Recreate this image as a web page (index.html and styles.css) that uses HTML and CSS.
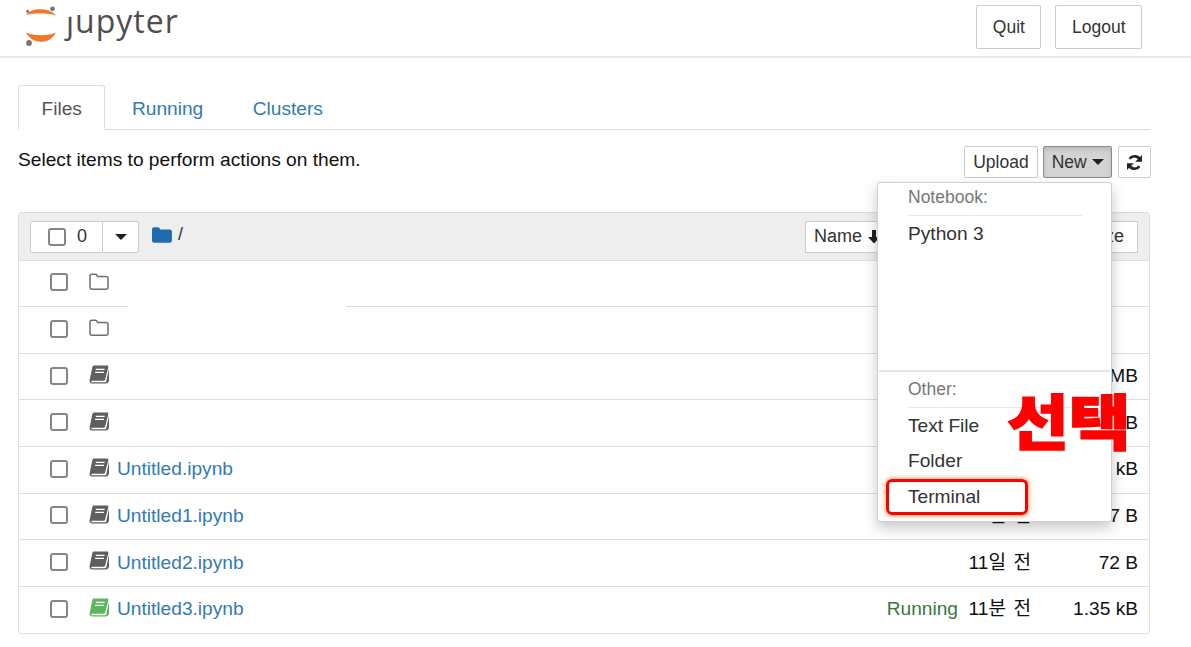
FILE: index.html
```html
<!DOCTYPE html>
<html lang="ko">
<head>
<meta charset="utf-8">
<title>Jupyter</title>
<link rel="stylesheet" href="styles.css">
</head>
<body>
<svg class="defs" width="0" height="0" aria-hidden="true">
  <symbol id="i-folder" viewBox="0 0 20 17">
    <path d="M1 3.2C1 2 1.8 1.2 3 1.2h3.4c1.100 0 1.700.7 1.900 1.500l.3.9h8.400c1.200 0 2 .8 2 2v8.600c0 1.200-.8 2-2 2H3c-1.200 0-2-.8-2-2z" fill="none" stroke="#6f6f6f" stroke-width="1.500"/>
  </symbol>
  <symbol id="i-book" viewBox="0 0 20 19">
    <path d="M5.200.6h13c.9 0 1.400.7 1.100 1.600l-3.100 12.100c-.3 1-.9 1.500-1.900 1.500H3.200c-.7 0-1 .3-1 .7 0 .5.4.8 1.100.8h12.600c.7 0 1.200-.4 1.400-1L20 3.400v12.300c-.4 1.500-1.600 2.700-3.200 2.700H3.200C1.300 18.400.2 17 .6 15.200L3.300 2.200C3.500 1.200 4.200.6 5.200.6z" fill="currentColor"/>
    <path d="M6.800 4.300h8.800M6.100 7.300h8.800" stroke="#fff" stroke-width="1.300"/>
  </symbol>
</svg>

<header class="topbar">
  <div class="logo">
    <svg class="logo-mark" width="32" height="40" viewBox="0 0 32 40" aria-hidden="true">
      <path d="M1 9C6 1.300 25 1.300 31 9.500 24 7 8 7 1 9z" fill="#f37726"/>
      <path d="M1 26.500C8 30 24 30 31 26.500 25 38.800 7 38.800 1 26.500z" fill="#f37726"/>
      <circle cx="27.500" cy="2.800" r="2.400" fill="#767677"/>
      <circle cx="2.600" cy="5.200" r="1.500" fill="#767677"/>
      <circle cx="4" cy="37" r="2.900" fill="#767677"/>
    </svg>
    <span class="logo-text"><span class="logo-j">j</span>upyter</span>
  </div>
  <div class="topbar-actions">
    <button class="btn btn-top">Quit</button>
    <button class="btn btn-top">Logout</button>
  </div>
</header>

<main class="page">
  <nav class="tabs">
    <a class="tab tab-active">Files</a>
    <a class="tab">Running</a>
    <a class="tab">Clusters</a>
  </nav>

  <div class="toolbar">
    <span class="hint">Select items to perform actions on them.</span>
    <div class="toolbar-actions">
      <button class="btn btn-tool">Upload</button>
      <button class="btn btn-tool btn-pressed">New <i class="caret"></i></button>
      <button class="btn btn-tool btn-refresh" aria-label="Refresh">
        <svg width="17" height="17" viewBox="0 0 17 17" aria-hidden="true">
          <path d="M14.200 6.500A6 6 0 0 0 3.600 4.800" fill="none" stroke="#222" stroke-width="2.600"/>
          <path d="M16 1v6.800H9.200z" fill="#222"/>
          <path d="M2.800 10.500a6 6 0 0 0 10.600 1.700" fill="none" stroke="#222" stroke-width="2.600"/>
          <path d="M1 16V9.200h6.800z" fill="#222"/>
        </svg>
      </button>
    </div>
  </div>

  <section class="list">
    <div class="list-head">
      <div class="select-group">
        <span class="select-all"><i class="check"></i><span>0</span></span>
        <span class="select-drop"><i class="caret"></i></span>
      </div>
      <svg class="crumb-icon" width="20" height="16" viewBox="0 0 20 16" aria-hidden="true">
        <path d="M0 2.500C0 1.200.9.300 2.200.300h3.600c1.200 0 1.900.8 2.100 1.600l.2.700h9.600c1.300 0 2.200.9 2.200 2.200v8.800c0 1.300-.9 2.100-2.200 2.100H2.200C.9 15.700 0 14.900 0 13.600z" fill="#1f6bb0"/>
      </svg>
      <span class="crumb">/</span>
      <div class="sort-group">
        <span class="sort sort-name">Name
          <svg width="14" height="15" viewBox="0 0 14 15" aria-hidden="true"><path d="M5 1h4v7h4l-6 6.500L1 8h4z" fill="#222"/></svg>
        </span>
        <span class="sort sort-mod"></span>
        <span class="sort sort-size">File size</span>
      </div>
    </div>

    <div class="row">
      <i class="check"></i><svg class="ficon"><use href="#i-folder"/></svg>
    </div>
    <div class="row">
      <i class="redact"></i>
      <i class="check"></i><svg class="ficon"><use href="#i-folder"/></svg>
    </div>
    <div class="row">
      <i class="check"></i><svg class="ficon nb"><use href="#i-book"/></svg>
      <span class="size size-only">MB</span>
    </div>
    <div class="row">
      <i class="check"></i><svg class="ficon nb"><use href="#i-book"/></svg>
      <span class="size size-only">B</span>
    </div>
    <div class="row">
      <i class="check"></i><svg class="ficon nb"><use href="#i-book"/></svg>
      <a class="name">Untitled.ipynb</a>
      <span class="size size-only">kB</span>
    </div>
    <div class="row">
      <i class="check"></i><svg class="ficon nb"><use href="#i-book"/></svg>
      <a class="name">Untitled1.ipynb</a>
      <span class="date">11일 전</span><span class="size">7 B</span>
    </div>
    <div class="row">
      <i class="check"></i><svg class="ficon nb"><use href="#i-book"/></svg>
      <a class="name">Untitled2.ipynb</a>
      <span class="date">11일 전</span><span class="size">72 B</span>
    </div>
    <div class="row">
      <i class="check"></i><svg class="ficon nb-run"><use href="#i-book"/></svg>
      <a class="name">Untitled3.ipynb</a>
      <span class="status">Running</span>
      <span class="date date-run">11분 전</span><span class="size">1.35 kB</span>
    </div>
  </section>
</main>

<div class="menu">
  <div class="menu-head">Notebook:</div>
  <div class="menu-item menu-python">Python 3</div>
  <div class="menu-rule"></div>
  <div class="menu-head">Other:</div>
  <div class="menu-item">Text File</div>
  <div class="menu-item">Folder</div>
  <div class="menu-item">Terminal</div>
  <div class="highlight"></div>
</div>
<div class="callout">선택</div>
</body>
</html>
```
FILE: styles.css
```css
* { box-sizing: border-box; }
html, body { margin: 0; height: 100%; }
body {
  position: relative;
  overflow: hidden;
  background: #fff;
  color: #111;
  font: 19.15px/1.4 "Liberation Sans", Arial, "Noto Sans CJK KR", sans-serif;
}
.defs { position: absolute; }
i { font-style: normal; }

.topbar {
  height: 58px;
  border-bottom: 2px solid #e7e7e7;
  display: flex;
  justify-content: space-between;
  padding: 5px 49px 0 25px;
}
.logo { display: flex; align-items: flex-start; height: 44px; }
.logo-mark { margin-top: 1px; flex: none; }
.logo-text {
  margin: -8px 0 0 9px;
  font: 32px/1.5 "Open Sans", sans-serif;
  letter-spacing: 1px;
  color: #4e4e4e;
}
.logo-j { display: inline-block; clip-path: inset(.62em -2px 0 -5px); }
.topbar-actions { display: flex; gap: 14px; }

.btn {
  font: inherit;
  font-size: 17.5px;
  color: #333;
  background: #fff;
  border: 1px solid #ccc;
  border-radius: 2px;
  padding: 0;
}
.btn-top { height: 44px; padding: 0 15.5px; }

.page { padding: 27px 41px 0 18px; }

.tabs { display: flex; gap: 3.5px; height: 45px; border-bottom: 1px solid #ddd; }
.tab {
  height: 45px;
  padding: 0 22px;
  line-height: 46px;
  color: #337ab7;
  border: 1px solid transparent;
}
.tab-active {
  padding: 0 22.5px;
  color: #555;
  background: #fff;
  border-color: #ddd #ddd #fff;
  border-radius: 3px 3px 0 0;
}

.toolbar {
  height: 82px;
  padding-top: 16px;
  display: flex;
  justify-content: space-between;
  align-items: flex-start;
}
.hint { line-height: 27px; }
.toolbar-actions { display: flex; gap: 5px; margin-right: -1px; }
.btn-tool { height: 32px; padding: 0 8.5px; }
.btn-pressed {
  padding: 0 7.5px;
  background: #d4d4d4;
  border-color: #8c8c8c;
  box-shadow: inset 0 3px 5px rgba(0,0,0,.125);
  margin-right: 1px;
}
.btn-refresh { width: 33px; padding: 0; display: flex; align-items: center; justify-content: center; }
.caret {
  display: inline-block;
  width: 0;
  height: 0;
  border-top: 6px solid #222;
  border-left: 6px solid transparent;
  border-right: 6px solid transparent;
  vertical-align: 3px;
}

.list { border: 1px solid #ddd; border-radius: 3px; height: 422px; }
.list-head {
  height: 46.6px;
  background: #eee;
  padding: 8px 11px 0 11px;
  display: flex;
  align-items: flex-start;
}
.select-group {
  display: flex;
  width: 109px;
  height: 32px;
  background: #fff;
  border: 1px solid #ccc;
  border-radius: 2px;
}
.select-all { width: 71px; display: flex; align-items: center; padding-left: 17px; gap: 11px; color: #333; font-size: 18px; }
.select-all .check { margin: 0; }
.select-drop { flex: 1; border-left: 1px solid #ccc; display: flex; align-items: center; justify-content: center; }
.select-drop .caret { vertical-align: 0; }
.crumb-icon { margin: 6px 0 0 13px; flex: none; }
.crumb { margin: 1px 0 0 6px; color: #333; font-size: 18px; }
.sort-group { margin-left: auto; display: flex; height: 32px; }
.sort {
  height: 32px;
  background: #fff;
  border: 1px solid #ccc;
  margin-left: -1px;
  padding: 0 8px;
  line-height: 28px;
  font-size: 18px;
  color: #333;
  white-space: nowrap;
}
.sort svg { vertical-align: -2px; }
.sort-name { width: 90px; }
.sort-mod { width: 130px; }
.sort-size { width: 115px; text-align: right; padding-right: 13px; }

.row {
  position: relative;
  height: 46.6px;
  border-top: 1px solid #ddd;
  display: flex;
  align-items: center;
  padding-left: 31px;
}
.check {
  display: block;
  flex: none;
  width: 18px;
  height: 18px;
  margin-top: -2px;
  border: 2px solid #858585;
  border-radius: 3px;
  background: #fff;
}
.ficon { width: 20px; height: 19px; margin: -4px 0 0 21px; flex: none; color: #6f6f6f; }
.nb { color: #5f5f5f; }
.nb-run { color: #5cb85c; }
.name { margin-left: 8px; color: #337ab7; }
.status { margin-left: auto; color: #3c763d; }
.date { margin-left: auto; width: 66px; text-align: right; white-space: nowrap; word-spacing: 2px; }
.date-run { margin-left: 7px; }
.size { width: 118px; padding-right: 11px; text-align: right; white-space: nowrap; }
.size-only { margin-left: auto; }
.redact { position: absolute; left: 109px; top: -2px; width: 218px; height: 3px; background: #fff; }

.menu {
  position: absolute;
  left: 877px;
  top: 182px;
  width: 235px;
  height: 340px;
  background: #fff;
  border: 1px solid rgba(0,0,0,.18);
  border-radius: 3px;
  box-shadow: 0 6px 14px rgba(0,0,0,.22);
  padding: 0 29px 0 30px;
  color: #333;
}
.menu-head {
  height: 33px;
  line-height: 29px;
  font-size: 17.5px;
  color: #777;
  border-bottom: 1px solid #e8e8e8;
}
.menu-item { height: 35.5px; line-height: 35px; }
.menu-python { margin-bottom: 118px; }
.menu-rule { height: 2px; margin: 0 -28px 3px -29px; background: #e5e5e5; }
.highlight {
  position: absolute;
  left: 8px;
  top: 296px;
  width: 142px;
  height: 36px;
  border: 3.5px solid #f00;
  border-radius: 6px;
  box-shadow: 0 0 4px 1px rgba(255,140,60,.8);
}
.callout {
  position: absolute;
  left: 1007px;
  top: 389px;
  font: 900 60px/1 "Noto Sans CJK KR", sans-serif;
  transform: scaleX(1.12);
  transform-origin: left center;
  -webkit-text-stroke: 1.5px #f00;
  color: #f00;
  white-space: nowrap;
}
```
